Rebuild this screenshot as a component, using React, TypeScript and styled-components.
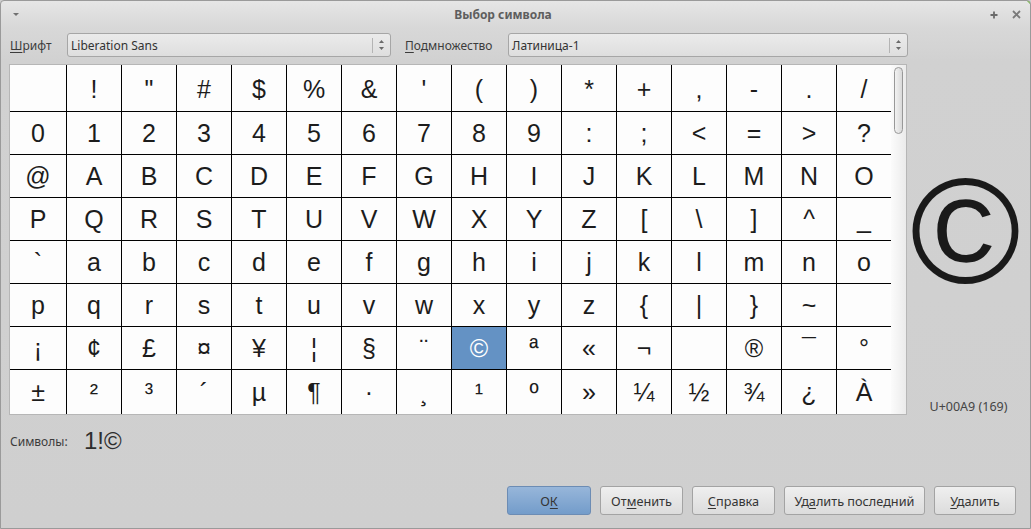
import React from 'react';
import styled, { createGlobalStyle } from 'styled-components';

const Global = createGlobalStyle`
  html, body { margin: 0; padding: 0; background: #cfcfcf; }
  body { font-family: "Noto Sans", "Open Sans", sans-serif; }
  #root { width: 1031px; height: 529px; }
`;

const Window = styled.div`
  position: relative;
  box-sizing: border-box;
  width: 1031px;
  height: 529px;
  border: 1px solid #9a9a9a;
  border-radius: 4px 4px 0 0;
  background: linear-gradient(#e6e6e6 0px, #d8d8d8 26px, #d1d1d1 60px, #cfcfcf 100%);
  display: flex;
  flex-direction: column;
  overflow: hidden;
  font-family: "Noto Sans", "Open Sans", sans-serif;
  font-size: 12px;
  color: #3a3a3a;
`;

const CornerTint = styled.div`
  position: absolute;
  top: -1px;
  right: -1px;
  width: 0;
  height: 0;
  border-top: 5px solid #6fb33f;
  border-left: 5px solid transparent;
`;

const TitleBar = styled.div`
  height: 27px;
  display: flex;
  align-items: center;
  flex-shrink: 0;
`;

const MenuArea = styled.div`
  width: 30px;
  display: flex;
  padding-left: 11px;
  box-sizing: border-box;
`;

const Title = styled.div`
  flex: 1;
  text-align: center;
  font-weight: bold;
  color: #5e5e5e;
  font-size: 12px;
`;

const Controls = styled.div`
  width: 55px;
  box-sizing: border-box;
  display: flex;
  justify-content: flex-end;
  align-items: center;
  gap: 14px;
  padding-right: 9px;
`;

const Body = styled.div`
  flex: 1;
  display: flex;
  flex-direction: column;
  padding: 0 0 13px 8px;
`;

const TopRow = styled.div`
  display: flex;
  align-items: center;
  margin-top: 5px;
  height: 24px;
`;

const Label = styled.div<{ $w: number; $ml?: number }>`
  width: ${(p) => p.$w}px;
  margin-left: ${(p) => p.$ml ?? 0}px;
  padding-left: 1px;
  box-sizing: border-box;
  color: #3c3c3c;
  white-space: nowrap;
`;

const Mn = styled.span`
  text-decoration: underline;
  text-underline-offset: 2px;
`;

const Combo = styled.div<{ $w: number }>`
  width: ${(p) => p.$w}px;
  height: 24px;
  box-sizing: border-box;
  border: 1px solid #a6a6a6;
  border-radius: 3px;
  background: linear-gradient(#ebebeb, #dedede);
  display: flex;
  align-items: center;
  padding-left: 3px;
  color: #333;
`;

const ComboText = styled.div`
  flex: 1;
`;

const Spinner = styled.div`
  width: 16px;
  height: 15px;
  border-left: 1px solid #b4b4b4;
  display: flex;
  align-items: center;
  justify-content: center;
  margin-right: 1px;
`;

const Main = styled.div`
  display: flex;
  margin-top: 7px;
  height: 351px;
`;

const Frame = styled.div`
  width: 898px;
  box-sizing: border-box;
  border: 1px solid #b6b6b6;
  display: flex;
  background: #fff;
`;

const Grid = styled.div`
  display: grid;
  grid-template-columns: 56px repeat(15, 54px);
  grid-template-rows: 46px repeat(6, 42px) 44px;
  gap: 1px;
  background: #000;
  width: 881px;
`;

const Cell = styled.div<{ $first?: boolean; $sel?: boolean }>`
  background: ${(p) => (p.$sel ? '#6492c4' : '#fdfdfd')};
  color: ${(p) => (p.$sel ? '#ffffff' : '#1c1c1c')};
  font-family: "Liberation Sans", Arial, sans-serif;
  font-size: 25px;
  display: flex;
  align-items: center;
  justify-content: center;
  padding-top: ${(p) => (p.$first ? 3 : 0)}px;
  box-sizing: border-box;
`;

const Track = styled.div`
  width: 15px;
  box-sizing: border-box;
  padding: 2px 0 0 3px;
  background: linear-gradient(to right, #fbfbfb, #ebebeb);
`;

const Thumb = styled.div`
  width: 9px;
  height: 67px;
  box-sizing: border-box;
  border: 1px solid #989898;
  border-radius: 5px;
  background: linear-gradient(to right, #f2f2f2, #d9d9d9);
`;

const SidePanel = styled.div`
  flex: 1;
  display: flex;
  flex-direction: column;
  align-items: center;
`;

const Preview = styled.div`
  flex: 1;
  display: flex;
  align-items: center;
  justify-content: center;
  font-family: "Liberation Sans", Arial, sans-serif;
  font-size: 150px;
  color: #1a1a1a;
  padding-right: 6px;
`;

const CodeText = styled.div`
  line-height: 16px;
  font-size: 12.5px;
  color: #454545;
`;

const SymbolsRow = styled.div`
  display: flex;
  align-items: center;
  height: 24px;
  margin-top: 14px;
`;

const SymbolsValue = styled.div`
  font-family: "Liberation Sans", Arial, sans-serif;
  font-size: 24px;
  color: #2e2e2e;
`;

const ButtonRow = styled.div`
  margin-top: auto;
  display: flex;
  justify-content: flex-end;
  gap: 9px;
  padding-right: 14px;
`;

const Button = styled.button<{ $w: number; $primary?: boolean }>`
  width: ${(p) => p.$w}px;
  height: 29px;
  box-sizing: border-box;
  border: 1px solid ${(p) => (p.$primary ? '#6c8cb4' : '#a3a3a3')};
  border-radius: 3px;
  background: ${(p) =>
    p.$primary ? 'linear-gradient(#97b6da, #739cca)' : 'linear-gradient(#efefef, #dcdcdc)'};
  font-family: "Noto Sans", "Open Sans", sans-serif;
  font-size: 12.7px;
  color: #353535;
  padding: 0;
`;

const rows: string[][] = [
  ['', '!', '"', '#', '$', '%', '&', "'", '(', ')', '*', '+', ',', '-', '.', '/'],
  '0123456789:;<=>?'.split(''),
  '@ABCDEFGHIJKLMNO'.split(''),
  'PQRSTUVWXYZ[\\]^_'.split(''),
  '`abcdefghijklmno'.split(''),
  [...'pqrstuvwxyz{|}~'.split(''), ''],
  ['¡', '¢', '£', '¤', '¥', '¦', '§', '¨', '©', 'ª', '«', '¬', '', '®', '¯', '°'],
  ['±', '²', '³', '´', 'µ', '¶', '·', '¸', '¹', 'º', '»', '¼', '½', '¾', '¿', 'À'],
];

const SpinArrows = () => (
  <svg width="7" height="12" viewBox="0 0 7 12">
    <path d="M3.5 1 L6 4 L1 4 Z" fill="#6a6a6a" />
    <path d="M3.5 11 L6 8 L1 8 Z" fill="#6a6a6a" />
  </svg>
);

export default function App() {
  return (
    <>
      <Global />
      <Window>
        <CornerTint />
        <TitleBar>
          <MenuArea>
            <svg width="8" height="5" viewBox="0 0 8 5">
              <path d="M1 1 L7 1 L4 4 Z" fill="#707070" />
            </svg>
          </MenuArea>
          <Title>Выбор символа</Title>
          <Controls>
            <svg width="8" height="8" viewBox="0 0 8 8">
              <path d="M4 0.5 V7.5 M0.5 4 H7.5" stroke="#6a6a6a" strokeWidth="1.8" />
            </svg>
            <svg width="9" height="9" viewBox="0 0 9 9">
              <path d="M1 1 L8 8 M8 1 L1 8" stroke="#7a7a7a" strokeWidth="1.8" />
            </svg>
          </Controls>
        </TitleBar>
        <Body>
          <TopRow>
            <Label $w={58}>
              <Mn>Ш</Mn>рифт
            </Label>
            <Combo $w={324}>
              <ComboText>Liberation Sans</ComboText>
              <Spinner>
                <SpinArrows />
              </Spinner>
            </Combo>
            <Label $w={104} $ml={13}>
              <Mn>П</Mn>одмножество
            </Label>
            <Combo $w={400}>
              <ComboText>Латиница-1</ComboText>
              <Spinner>
                <SpinArrows />
              </Spinner>
            </Combo>
          </TopRow>
          <Main>
            <Frame>
              <Grid>
                {rows.map((row, r) =>
                  row.map((ch, c) => (
                    <Cell key={`${r}-${c}`} $first={r === 0} $sel={r === 6 && c === 8}>
                      {ch}
                    </Cell>
                  ))
                )}
              </Grid>
              <Track>
                <Thumb />
              </Track>
            </Frame>
            <SidePanel>
              <Preview>©</Preview>
              <CodeText>U+00A9 (169)</CodeText>
            </SidePanel>
          </Main>
          <SymbolsRow>
            <Label $w={75}>Символы:</Label>
            <SymbolsValue>1!©</SymbolsValue>
          </SymbolsRow>
          <ButtonRow>
            <Button $w={84} $primary>
              О<Mn>К</Mn>
            </Button>
            <Button $w={83}>
              От<Mn>м</Mn>енить
            </Button>
            <Button $w={83}>
              <Mn>С</Mn>правка
            </Button>
            <Button $w={141}>
              Уд<Mn>а</Mn>лить последний
            </Button>
            <Button $w={82}>
              <Mn>У</Mn>далить
            </Button>
          </ButtonRow>
        </Body>
      </Window>
    </>
  );
}
